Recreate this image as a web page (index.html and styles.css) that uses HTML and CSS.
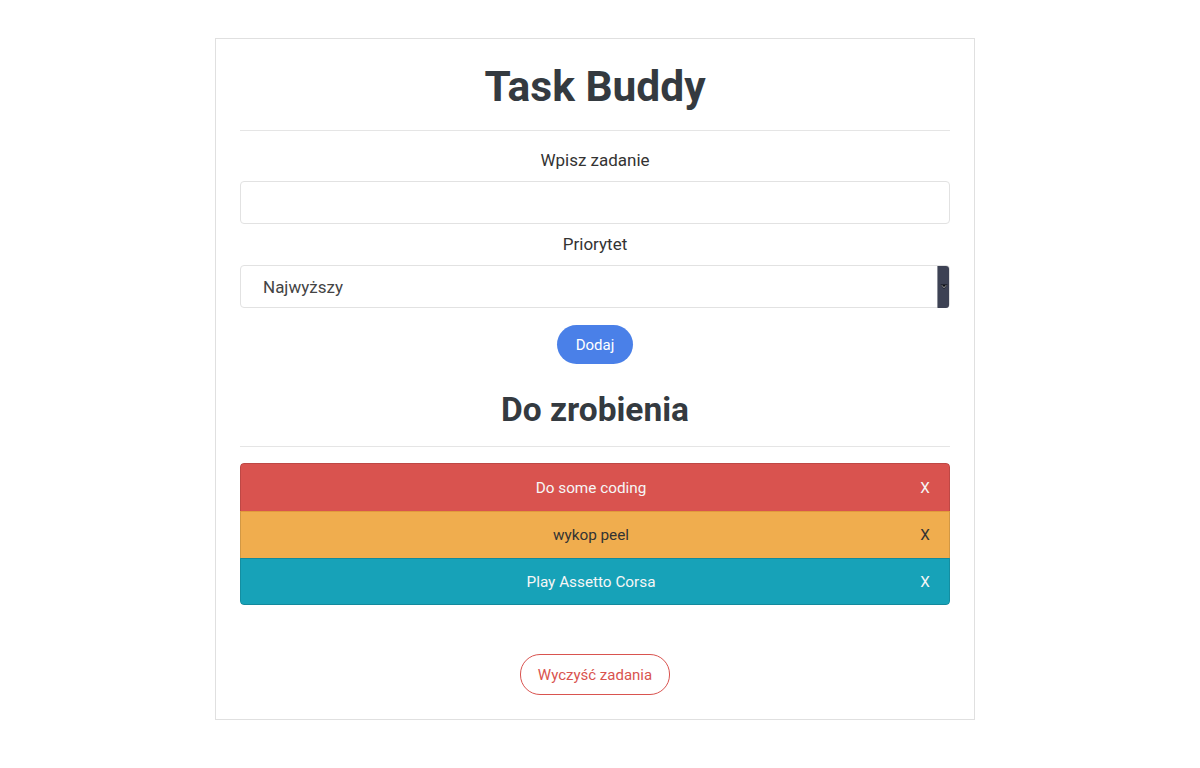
FILE: index.html
```html
<!DOCTYPE html>
<html lang="pl">
<head>
<meta charset="utf-8">
<title>Task Buddy</title>
<link rel="stylesheet" href="styles.css">
</head>
<body>
<main class="app">
  <h1 class="title">Task Buddy</h1>
  <hr class="rule">
  <form class="form">
    <label class="label" for="task">Wpisz zadanie</label>
    <input class="field" id="task" type="text">
    <label class="label" for="prio">Priorytet</label>
    <div class="select-wrap">
      <select class="field select" id="prio">
        <option>Najwyższy</option>
        <option>Średni</option>
        <option>Niski</option>
      </select>
      <span class="select-arrow"><svg width="8" height="6" viewBox="0 0 8 6"><path d="M0.5 0.5 L4 5 L7.5 0.5 Z" fill="#0d0f14"/><path d="M1.8 1.2 L4 3.8 L6.2 1.2" fill="none" stroke="#d8d8d8" stroke-width="0.7"/></svg></span>
    </div>
    <button class="btn-add" type="button">Dodaj</button>
  </form>
  <h2 class="subtitle">Do zrobienia</h2>
  <hr class="rule rule-sub">
  <ul class="tasks">
    <li class="task task-red"><span class="task-text">Do some coding</span><span class="task-x">X</span></li>
    <li class="task task-orange"><span class="task-text">wykop peel</span><span class="task-x">X</span></li>
    <li class="task task-teal"><span class="task-text">Play Assetto Corsa</span><span class="task-x">X</span></li>
  </ul>
  <div class="clear-row"><button class="btn-clear" type="button">Wyczyść zadania</button></div>
</main>
</body>
</html>
```

FILE: styles.css
```css
* { box-sizing: border-box; }
html, body { margin: 0; padding: 0; background: #fff; }
body {
  font-family: Roboto, "Liberation Sans", Arial, sans-serif;
  color: #333;
  padding: 38px 10px 0 0;
}
.app {
  width: 760px;
  margin: 0 auto;
  border: 1px solid #e0e0e0;
  padding: 24px;
  display: flex;
  flex-direction: column;
}
.title {
  margin: 0 0 19px;
  font-size: 42.5px;
  line-height: 48px;
  font-weight: 700;
  text-align: center;
  color: #343a40;
}
.rule {
  width: 100%;
  margin: 0;
  border: 0;
  border-top: 1px solid #e5e5e5;
}
.form {
  display: flex;
  flex-direction: column;
  align-items: center;
  padding-top: 17px;
}
.label {
  display: block;
  font-size: 17px;
  line-height: 24px;
  color: #333;
  margin-bottom: 9px;
}
.field {
  width: 100%;
  height: 43px;
  border: 1px solid #e2e2e2;
  border-radius: 4px;
  background: #fff;
  font-family: inherit;
  font-size: 17px;
  color: #444;
  margin-bottom: 8px;
}
.select-wrap {
  position: relative;
  width: 100%;
  margin-bottom: 17px;
}
.select {
  display: block;
  margin: 0;
  appearance: none;
  -webkit-appearance: none;
  padding: 0 22px;
}
.select-arrow {
  position: absolute;
  right: 1px;
  top: 1px;
  width: 12px;
  height: 42px;
  background: #3d4254;
  border-left: 1px solid #8c8f99;
  border-radius: 0 3px 3px 0;
  display: flex;
  align-items: center;
  justify-content: center;
}
.btn-add {
  width: 76px;
  height: 39px;
  border: 0;
  border-radius: 20px;
  background: #4a80e8;
  color: #fff;
  font-family: inherit;
  font-size: 15px;
}
.subtitle {
  margin: 27px 0 17px;
  font-size: 33.5px;
  line-height: 38px;
  font-weight: 700;
  text-align: center;
  color: #343a40;
}
.tasks {
  list-style: none;
  margin: 16px 0 0;
  padding: 0;
  border-radius: 4px;
  overflow: hidden;
}
.task {
  display: flex;
  align-items: center;
  height: 47px;
  padding: 0 19px 0 21px;
  font-size: 15.3px;
  color: #f6f6f6;
  border-left: 1px solid rgba(0,0,0,0.12);
  border-right: 1px solid rgba(0,0,0,0.12);
}
.task:first-child { border-top: 1px solid rgba(0,0,0,0.12); border-radius: 4px 4px 0 0; height: 48px; }
.task:last-child { border-bottom: 1px solid rgba(0,0,0,0.15); border-radius: 0 0 4px 4px; }
.task-text { flex: 1; text-align: center; }
.task-x { width: 10px; text-align: center; }
.task-red { background: #d9534f; }
.task-orange { background: #f0ad4e; color: #333; border-top: 1px solid #e19a3c; }
.task-teal { background: #17a2b8; border-top: 1px solid #13899c; }
.clear-row {
  display: flex;
  justify-content: center;
  margin-top: 49px;
}
.btn-clear {
  width: 150px;
  height: 41px;
  border: 1px solid #d9534f;
  border-radius: 20px;
  background: #fff;
  color: #d9534f;
  font-family: inherit;
  font-size: 15px;
}
```
